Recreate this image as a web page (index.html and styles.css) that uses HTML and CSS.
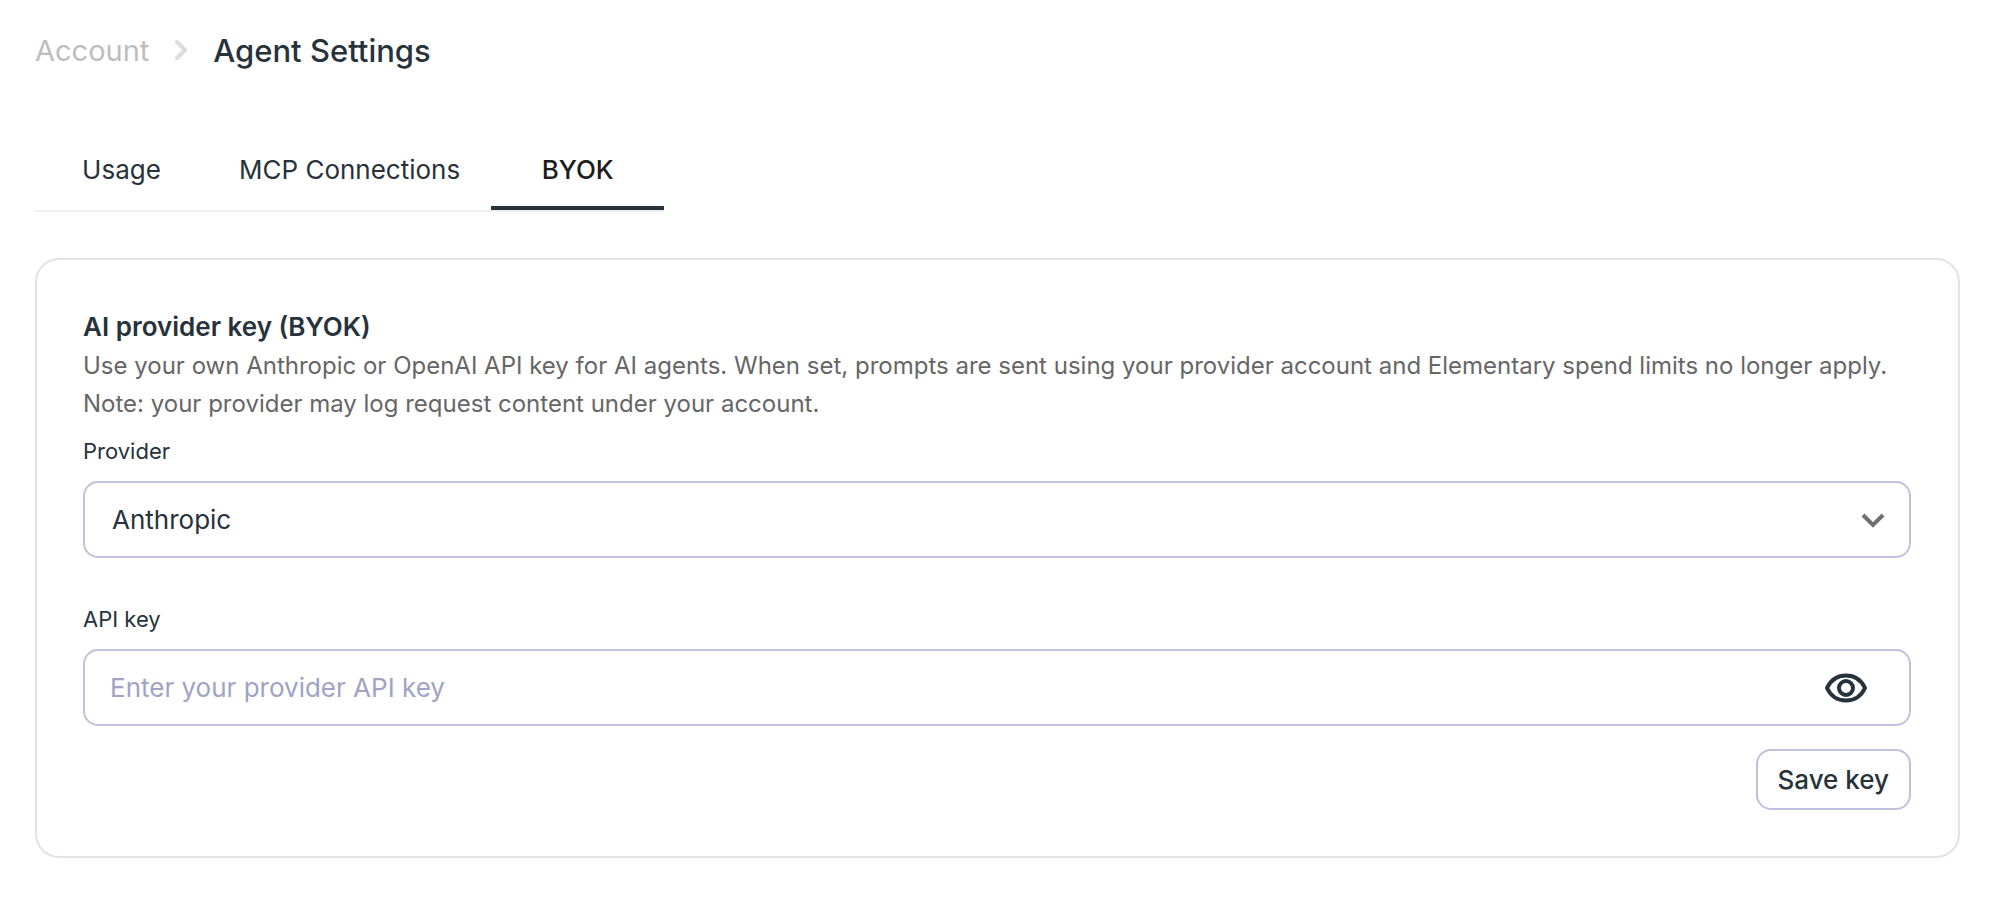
FILE: index.html
```html
<!DOCTYPE html>
<html lang="en">
<head>
<meta charset="utf-8">
<meta name="viewport" content="width=device-width, initial-scale=1">
<title>Agent Settings</title>
<link rel="stylesheet" href="styles.css">
</head>
<body>
<main class="page">
  <nav class="breadcrumb" aria-label="Breadcrumb">
    <a class="breadcrumb-link" href="#account">Account</a>
    <svg class="breadcrumb-sep" viewBox="0 0 14 22" aria-hidden="true"><path d="M3 3l8 8-8 8"/></svg>
    <h1 class="breadcrumb-title">Agent Settings</h1>
  </nav>

  <div class="tabs" role="tablist">
    <button class="tab" type="button" role="tab" aria-selected="false">Usage</button>
    <button class="tab" type="button" role="tab" aria-selected="false">MCP Connections</button>
    <button class="tab tab-active" type="button" role="tab" aria-selected="true">BYOK</button>
  </div>

  <form class="card">
    <h2 class="card-title">AI provider key (BYOK)</h2>
    <p class="card-text">Use your own Anthropic or OpenAI API key for AI agents. When set, prompts are sent using your provider account and Elementary spend limits no longer apply. Note: your provider may log request content under your account.</p>

    <div class="field">
      <label class="label" for="provider">Provider</label>
      <div class="control">
        <select class="select" id="provider">
          <option>Anthropic</option>
          <option>OpenAI</option>
        </select>
        <svg class="chevron" viewBox="0 0 24 16" aria-hidden="true"><path d="M2 3l10 10L22 3"/></svg>
      </div>
    </div>

    <div class="field">
      <label class="label" for="api-key">API key</label>
      <div class="control control-box">
        <input class="input" id="api-key" type="password" placeholder="Enter your provider API key">
        <button class="reveal" type="button" aria-label="Show key">
          <svg class="eye" viewBox="0 0 42 30" aria-hidden="true">
            <path d="M2 15C6 6.500 13 2.500 21 2.500S36 6.500 40 15C36 23.500 29 27.500 21 27.500S6 23.500 2 15Z"/>
            <circle cx="21" cy="15" r="7"/>
          </svg>
        </button>
      </div>
    </div>

    <div class="actions">
      <button class="save" type="submit">Save key</button>
    </div>
  </form>
</main>
</body>
</html>
```
FILE: styles.css
```css
* {
  box-sizing: border-box;
}

body {
  margin: 0;
  background: #fff;
  color: #27323b;
  font-family: Inter, "Liberation Sans", sans-serif;
}

button,
input,
select {
  font: inherit;
  color: inherit;
}

.page {
  padding: 30px 40px 40px 35px;
}

.breadcrumb {
  display: flex;
  align-items: center;
  gap: 25px;
  height: 40px;
}

.breadcrumb-link {
  color: #bdbdbd;
  font-size: 29px;
  text-decoration: none;
}

.breadcrumb-sep {
  width: 14px;
  height: 22px;
  fill: none;
  stroke: #dcdcdc;
  stroke-width: 4;
  stroke-linecap: round;
  stroke-linejoin: round;
}

.breadcrumb-title {
  margin: 0;
  font-size: 31px;
  font-weight: 500;
}

.tabs {
  display: flex;
  width: fit-content;
  margin-top: 60px;
  border-bottom: 2px solid #efefef;
}

.tab {
  min-width: 173px;
  height: 80px;
  padding: 2px 31px 0;
  border: 0;
  border-bottom: 4px solid transparent;
  background: none;
  font-size: 26px;
}

.tab-active {
  border-bottom-color: #27323b;
  color: #1c1c1c;
  font-weight: 500;
}

.card {
  display: flex;
  flex-direction: column;
  margin-top: 46px;
  padding: 46px 47px 46px 46px;
  border: 2px solid #e3e3e3;
  border-radius: 24px;
}

.card-title {
  margin: 0;
  font-size: 26px;
  font-weight: 600;
  line-height: 41px;
}

.card-text {
  margin: 0;
  color: #666;
  font-size: 24px;
  line-height: 38px;
}

.field {
  display: flex;
  flex-direction: column;
}

.field + .field {
  margin-top: 33px;
}

.label {
  padding: 13px 0 15px;
  font-size: 22px;
  line-height: 30px;
}

.control {
  position: relative;
  display: flex;
  align-items: center;
}

.select,
.control-box {
  width: 100%;
  height: 77px;
  border: 2px solid #bfc1df;
  border-radius: 15px;
  background: #fff;
}

.select {
  padding: 0 72px 0 27px;
  appearance: none;
  font-size: 26px;
}

.chevron {
  position: absolute;
  right: 26px;
  width: 24px;
  height: 16px;
  fill: none;
  stroke: #707070;
  stroke-width: 4;
  pointer-events: none;
}

.input {
  flex: 1;
  min-width: 0;
  height: 100%;
  padding: 0 25px;
  border: 0;
  background: none;
  outline: none;
  font-size: 26px;
}

.input::placeholder {
  color: #a0a3c4;
  opacity: 1;
}

.reveal {
  display: flex;
  margin-right: 42px;
  padding: 0;
  border: 0;
  background: none;
}

.eye {
  width: 42px;
  height: 30px;
  fill: none;
  stroke: #27323b;
  stroke-width: 4;
  stroke-linejoin: round;
}

.actions {
  display: flex;
  justify-content: flex-end;
  margin-top: 23px;
}

.save {
  height: 61px;
  padding: 0 20px;
  border: 2px solid #bfc1df;
  border-radius: 15px;
  background: #fff;
  font-size: 26px;
  font-weight: 500;
}
```
